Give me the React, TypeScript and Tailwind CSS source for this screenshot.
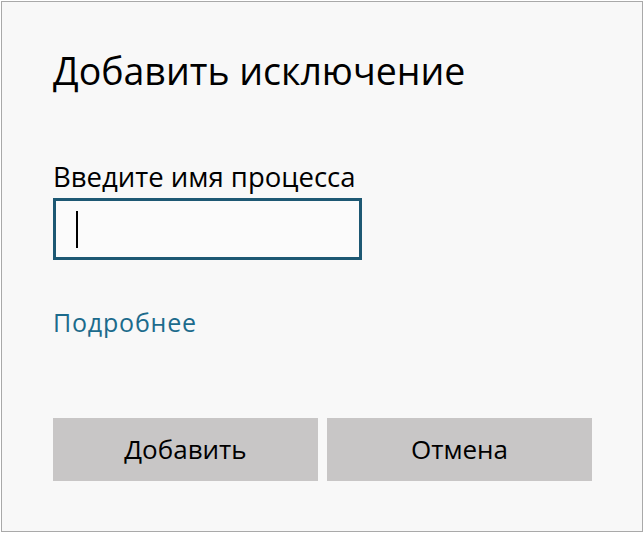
export default function App() {
  return (
    <div className="w-[644px] h-[534px] bg-white pl-px pt-px">
      <div
        className="w-[642px] h-[531px] border border-[#a9a9a9] bg-[#f8f8f8] pl-[51px] pr-[50px] flex flex-col"
        style={{ fontFamily: '"Open Sans", "Noto Sans", sans-serif' }}
      >
        {/* Title */}
        <h1 className="mt-[43px] text-[37.5px] leading-[52px] font-normal text-black">
          Добавить исключение
        </h1>

        {/* Process name */}
        <label className="mt-[63px] text-[27.5px] leading-[34px] text-black">
          Введите имя процесса
        </label>
        <div className="mt-[4px] w-[309px] h-[62px] border-[3px] border-[#1d5873] bg-[#fbfbfb] flex items-center pl-[20px]">
          <div className="w-[2px] h-[37px] bg-black" />
        </div>

        <a className="mt-[46px] text-[25px] leading-[32px] tracking-[0.8px] text-[#1c6b8c] w-fit">Подробнее</a>

        {/* Buttons */}
        <div className="mt-[80px] flex gap-[9px]">
          <button className="w-[266px] h-[63px] bg-[#c8c6c6] text-[26px] text-black">Добавить</button>
          <button className="w-[266px] h-[63px] bg-[#c8c6c6] text-[26px] text-black">Отмена</button>
        </div>
      </div>
    </div>
  );
}
